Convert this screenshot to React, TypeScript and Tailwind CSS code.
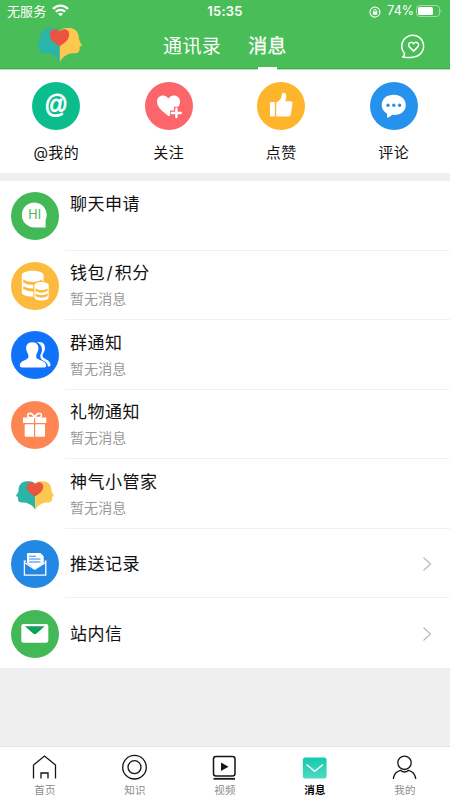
import type { ReactNode } from 'react';

interface IconProps {
  className?: string;
}

function Logo({ className }: IconProps) {
  return (
    <svg viewBox="0 0 134 101" className={className}>
      <path d="M68 8C60 0 48 0 38 0C18 1 9 14 9 33C9 40 4 44 0 51C1 54 6 54 7 56C6 62 7 72 14 74C20 76 26 74 34 76C52 80 62 90 68 101Z" fill="#2ab5a8" />
      <path d="M68 8C74 0 86 0 96 0C116 1 125 14 125 33C126 40 130 44 134 51C133 54 128 54 127 56C128 62 127 72 120 74C114 76 108 74 100 76C84 80 74 90 68 101Z" fill="#fdc84f" />
      <path d="M67 54C54 47 38 35 38 20C38 1 60-1 67 12C74-1 96 1 96 20C96 35 80 47 67 54Z" fill="#ea5541" />
    </svg>
  );
}

function StatusBar() {
  return (
    <div className="relative flex h-[23px] items-center justify-between pl-[7px] pr-[8px] text-[13px] leading-none">
      <div className="flex items-center gap-[6px]">
        <span className="tracking-[0.1px]">无服务</span>
        <svg viewBox="0 0 17 13" className="-mt-[2px] h-[13px] w-[17px]" fill="none" stroke="white">
          <path d="M1 5C5.3.6 11.7.6 16 5" strokeWidth="2.3" />
          <path d="M3.8 7.8C6.5 5.2 10.5 5.2 13.2 7.8" strokeWidth="2.2" />
          <path d="M8.5 12.3L5.9 9.8Q8.5 7.9 11.1 9.8Z" fill="white" stroke="none" />
        </svg>
      </div>
      <span className="absolute left-1/2 -translate-x-1/2 text-[13px] font-semibold tracking-[0.2px]">15:35</span>
      <div className="flex items-center">
        <svg viewBox="0 0 12 12" className="mr-[6px] h-3 w-3" fill="none" stroke="white">
          <path d="M10.2 8.8A5 5 0 1 1 10.8 4.7M11 6.2A5 5 0 0 1 10.3 8.5" strokeWidth="1.1" />
          <path d="M9.3 5L11.8 4.8L10.8 7Z" fill="white" stroke="none" />
          <rect x="3.8" y="5.5" width="4.4" height="3.2" fill="white" stroke="none" />
          <path d="M4.7 5.6V4.4Q6 2.3 7.3 4.4V5.6" strokeWidth="1" />
        </svg>
        <span className="mr-[2px] text-[12.5px]">74%</span>
        <svg viewBox="0 0 26 12" className="-mt-px h-3 w-[26px]">
          <rect x=".5" y=".5" width="23" height="11" rx="3" fill="none" stroke="#a0dda7" />
          <rect x="2" y="2" width="15" height="8" rx="1.6" fill="white" />
          <path d="M24.6 4.2Q26.6 6 24.6 7.8Z" fill="#a0dda7" />
        </svg>
      </div>
    </div>
  );
}

function Header() {
  return (
    <header className="h-[70px] shrink-0 border-b border-[#b5e2ba] bg-[#49bd57] text-white">
      <StatusBar />
      <div className="flex h-[46px] items-start border-b border-[#35b045] pl-[37px] pr-[24px]">
        <Logo className="mt-[5px] h-[34px] w-[45px]" />
        <nav className="ml-[81px] flex gap-[27px] text-[19px] tracking-[0.4px]">
          <span className="flex h-[46px] items-center leading-none">通讯录</span>
          <span className="relative flex h-[46px] items-center leading-none [-webkit-text-stroke:0.3px_white]">
            消息
            <i className="absolute -bottom-px left-[10px] h-[3px] w-[19px] bg-white" />
          </span>
        </nav>
        <svg viewBox="0 0 26 26" className="ml-auto mt-[10px] h-[26px] w-[26px]" fill="none" stroke="white" strokeWidth="1.5" strokeLinejoin="round">
          <path d="M4.4 20.2A10.9 10.9 0 1 1 13.6 24C10 25 6 24.6 2.6 24Q5 22.4 4.4 20.2Z" />
          <path d="M13.6 18.1L9.4 13.9C6.8 10.6 11.2 7.5 13.6 10.7C16 7.5 20.4 10.6 17.8 13.9Z" />
        </svg>
      </div>
    </header>
  );
}

function HeartPlus() {
  return (
    <svg viewBox="0 0 48 48" className="h-12 w-12">
      <path d="M23.7 34.2C18 29.5 12 25.5 12 19.7C12 13 20 11.3 23.4 16.4C26.8 11.3 35 13 35 19.7C35 25 29 30 23.7 34.2Z" fill="white" />
      <path d="M31.5 24.8V37M25.2 31H37.6" stroke="#fc666b" strokeWidth="5" />
      <path d="M31.4 26.7V35.1M27 31H35.8" stroke="white" strokeWidth="2.4" strokeLinecap="round" />
    </svg>
  );
}

function Thumb() {
  return (
    <svg viewBox="0 0 48 48" className="h-12 w-12" fill="white">
      <rect x="13" y="20" width="4.8" height="14.5" rx=".8" />
      <path d="M19.2 20.5C22.8 19 24.6 16.5 24.8 12.5C25 10 28.8 10 29.2 13.2C29.4 15.5 29 17.5 28.2 19.3H33.8Q35.7 19.3 35.5 21.5L33.8 32.4Q33.4 34.5 31.4 34.5H19.2Z" />
    </svg>
  );
}

function CommentDots() {
  return (
    <svg viewBox="0 0 48 48" className="h-12 w-12">
      <path d="M17 35.8V31.4C8.5 27.2 10.2 12.8 23.6 12.8C31 12.8 35.8 17.4 35.8 23C35.8 29.8 29.8 33.8 22.2 32.8Q19.8 35.3 17 35.8Z" fill="white" />
      <g fill="#2692ed">
        <circle cx="18" cy="23.2" r="1.7" />
        <circle cx="23.8" cy="23.2" r="1.7" />
        <circle cx="29.6" cy="23.2" r="1.7" />
      </g>
    </svg>
  );
}

function HiBubble() {
  return (
    <svg viewBox="0 0 48 48" className="h-12 w-12">
      <path d="M23.4 10.4A12.4 12.4 0 0 1 34.6 28V35.5H23.4A12.5 12.5 0 0 1 23.4 10.4Z" fill="white" />
      <text x="23.7" y="27.3" textAnchor="middle" fontSize="12.5" letterSpacing=".2" fill="#42b956">HI</text>
    </svg>
  );
}

function Coins() {
  return (
    <svg viewBox="0 0 48 48" className="h-12 w-12">
      <path d="M10.8 13.4C10.8 7.2 32.6 7.2 32.6 13.4V30.5C32.6 36 10.8 36 10.8 30.5Z" fill="white" />
      <path d="M12.2 17.5Q21.7 22.5 31.2 17.5V20.5Q21.7 25.5 12.2 20.5ZM12.2 24.2Q21.7 29 31.2 24.2V27Q21.7 32 12.2 27Z" fill="#fcbb3f" />
      <path d="M22.3 23.5C22.3 17.8 38.7 17.8 38.7 23.5V35.5C38.7 41 22.3 41 22.3 35.5Z" fill="#fcbb3f" />
      <path d="M23.3 23.5C23.3 18.7 37.7 18.7 37.7 23.5V35C37.7 39.8 23.3 39.8 23.3 35Z" fill="white" />
      <path d="M24.4 26.5Q30.5 30 36.6 26.5V29Q30.5 32.5 24.4 29ZM24.4 31.6Q30.5 35 36.6 31.6V34Q30.5 37.5 24.4 34Z" fill="#fcbb3f" />
    </svg>
  );
}

function Group() {
  return (
    <svg viewBox="0 0 48 48" className="h-12 w-12" fill="white">
      <path d="M26 11.5C31.5 9.8 34.8 13.5 33.8 18.8C33.4 21.2 31.3 23 31.5 25C32 28.6 39.3 28 39.6 34.5Q38.6 35.8 36.8 35.3Q36.8 31.8 32.4 29.8C29.8 28.5 28.9 26.5 29.4 24C31.8 20.5 32.2 14 26 11.5Z" />
      <path d="M21.3 11.3C26 11.3 28 14.5 27.3 18.8C26.8 21.2 24.9 23.2 25.2 25.8C25.7 30.2 34.8 28.5 35.2 34.5Q35.2 36.6 32.3 36.6H11.2Q8.7 36.6 8.7 34.5C9.2 28.5 17 30 17.5 25.8C17.7 23.2 15.8 21.2 15.3 18.8C14.5 14.5 16.6 11.3 21.3 11.3Z" />
    </svg>
  );
}

function Gift() {
  return (
    <svg viewBox="0 0 48 48" className="h-12 w-12" fill="white">
      <path d="M23.6 16.2Q20.5 11.2 17.4 12.8Q15.8 15 18 16.5H29.2Q31.4 15 29.8 12.8Q26.7 11.2 23.6 16.2Z" fill="none" stroke="white" strokeWidth="1.6" />
      <path d="M12 16.5H23V22H12ZM24.2 16.5H35.3V22H24.2ZM13.7 23.3H23V35.8H14.7Q13.7 35.8 13.7 34.8ZM24.2 23.3H34V34.8Q34 35.8 33 35.8H24.2Z" />
    </svg>
  );
}

function OpenLetter() {
  return (
    <svg viewBox="0 0 48 48" className="h-12 w-12">
      <path d="M16 21V14Q16 13 17 13H29.5L32.7 16.2V23L23.7 29L16 23Z" fill="white" />
      <path d="M18 16.2H25M18 19H29.5M18 22H29.5" stroke="#2387e4" strokeWidth="1.1" />
      <path d="M15 21.2H13.4V35.2H34.8V21.2H33.5M13.5 22.5L23.7 29.2L34.7 22.5" fill="none" stroke="white" strokeWidth="1.3" />
    </svg>
  );
}

function Mail() {
  return (
    <svg viewBox="0 0 48 48" className="h-12 w-12">
      <rect x="10.3" y="14" width="27" height="18.8" rx="2.2" fill="white" />
      <path d="M14 16.3H33.7L25.5 23.4Q23.8 25 22.1 23.4Z" fill="#0ba259" />
    </svg>
  );
}

const shortcuts: { label: string; color: string; icon: ReactNode }[] = [
  {
    label: '@我的',
    color: 'bg-[#0bbd8d]',
    icon: <span className="-mt-[3px] scale-y-110 font-['Liberation_Sans'] text-[23px] leading-none [-webkit-text-stroke:0.8px_white]">@</span>,
  },
  { label: '关注', color: 'bg-[#fc666b]', icon: <HeartPlus /> },
  { label: '点赞', color: 'bg-[#ffb52b]', icon: <Thumb /> },
  { label: '评论', color: 'bg-[#2692ed]', icon: <CommentDots /> },
];

interface Row {
  title: ReactNode;
  sub?: string;
  color?: string;
  icon: ReactNode;
  link?: boolean;
}

const rows: Row[] = [
  { title: '聊天申请', sub: '', color: 'bg-[#42b956]', icon: <HiBubble /> },
  { title: <>钱包<span className="mx-[1.5px]">/</span>积分</>, sub: '暂无消息', color: 'bg-[#fcbb3f]', icon: <Coins /> },
  { title: '群通知', sub: '暂无消息', color: 'bg-[#1071fa]', icon: <Group /> },
  { title: '礼物通知', sub: '暂无消息', color: 'bg-[#fd8653]', icon: <Gift /> },
  { title: '神气小管家', sub: '暂无消息', icon: <Logo className="mt-[2px] h-[29px] w-[38px]" /> },
  { title: '推送记录', color: 'bg-[#2387e4]', icon: <OpenLetter />, link: true },
  { title: '站内信', color: 'bg-[#42b956]', icon: <Mail />, link: true },
];

function MessageRow({ row, last }: { row: Row; last: boolean }) {
  return (
    <li className="flex h-[69.57px] items-center pl-[11px] pt-px">
      <div className={`flex h-12 w-12 shrink-0 items-center justify-center rounded-full ${row.color ?? ''}`}>
        {row.icon}
      </div>
      <div className={`ml-[6px] flex h-full flex-1 items-center justify-between pl-[5px] pr-[18px] ${last ? '' : 'border-b border-[#f1f1f1]'}`}>
        <div className={row.link ? 'pt-px' : 'h-full pt-[10.5px]'}>
          <p className="text-[17px] leading-[22px] tracking-[0.5px]">{row.title}</p>
          {row.sub && <p className="mt-[6px] text-[14px] leading-[18px] tracking-[0.1px] text-[#999]">{row.sub}</p>}
        </div>
        {row.link && (
          <svg viewBox="0 0 10 16" className="h-4 w-[10px]" fill="none" stroke="#b5b5b5" strokeWidth="1.1">
            <path d="M1.5 1.5L8.5 8L1.5 14.5" />
          </svg>
        )}
      </div>
    </li>
  );
}

const tabs: { label: string; active?: boolean; icon: ReactNode }[] = [
  {
    label: '首页',
    icon: <path d="M2.5 24.5V11L13.5 2L24.5 11V24.5M10 24.5V19H17V24.5" />,
  },
  {
    label: '知识',
    icon: (
      <>
        <circle cx="13.5" cy="13.2" r="11.8" />
        <circle cx="13.5" cy="13.2" r="6.5" />
      </>
    ),
  },
  {
    label: '视频',
    icon: (
      <>
        <rect x="2.5" y="2.5" width="21.5" height="19.5" rx="2.5" strokeWidth="1.5" />
        <path d="M2.5 24.8H24" strokeWidth="1.8" />
        <path d="M10 8.5L17.5 12.7L10 17Z" fill="#151515" stroke="none" />
      </>
    ),
  },
  {
    label: '消息',
    active: true,
    icon: (
      <>
        <defs>
          <linearGradient id="mailFill" x1="0" y1="0" x2="0" y2="1">
            <stop offset="0" stopColor="#13c9aa" />
            <stop offset="1" stopColor="#4fd9c5" />
          </linearGradient>
        </defs>
        <rect x="1.8" y="3.5" width="23.8" height="21" rx="2.5" fill="url(#mailFill)" stroke="none" />
        <path d="M5.5 10.5L13.7 17.3L22 10.5" stroke="white" strokeWidth="1.4" />
      </>
    ),
  },
  {
    label: '我的',
    icon: (
      <>
        <circle cx="13.5" cy="8.8" r="6.7" />
        <path d="M2.3 25C3 19.5 6.5 17 9.5 16.3Q13.5 19.8 17.5 16.3C20.5 17 24 19.5 24.8 25" />
      </>
    ),
  },
];

function TabBar() {
  return (
    <nav className="flex h-[54px] shrink-0 border-t border-[#e3e3e3] bg-white">
      {tabs.map((tab) => (
        <div key={tab.label} className="flex flex-1 flex-col items-center pt-[7px]">
          <svg viewBox="0 0 27 27" className="mr-px h-[27px] w-[27px]" fill="none" stroke="#151515" strokeWidth="1.3">
            {tab.icon}
          </svg>
          <span className={`mt-[3px] text-[10.5px] leading-[14px] tracking-[0.2px] ${tab.active ? 'font-bold text-black' : 'text-[#8c8c8c]'}`}>
            {tab.label}
          </span>
        </div>
      ))}
    </nav>
  );
}

export default function App() {
  return (
    <div className="flex h-[800px] w-[450px] flex-col overflow-hidden bg-[#efefef] font-['Inter','Noto_Sans_CJK_SC',sans-serif] text-[#111]">
      <Header />
      <section className="flex h-[103px] shrink-0 bg-white">
        {shortcuts.map((item) => (
          <div key={item.label} className="flex flex-1 flex-col items-center pt-[12px]">
            <div className={`flex h-12 w-12 items-center justify-center rounded-full text-white ${item.color}`}>
              {item.icon}
            </div>
            <span className="mt-[13px] text-[15px] leading-[20px] tracking-[0.4px]">{item.label}</span>
          </div>
        ))}
      </section>
      <ul className="mt-[8px] shrink-0 bg-white">
        {rows.map((row, i) => (
          <MessageRow key={i} row={row} last={i === rows.length - 1} />
        ))}
      </ul>
      <div className="flex-1" />
      <TabBar />
    </div>
  );
}
